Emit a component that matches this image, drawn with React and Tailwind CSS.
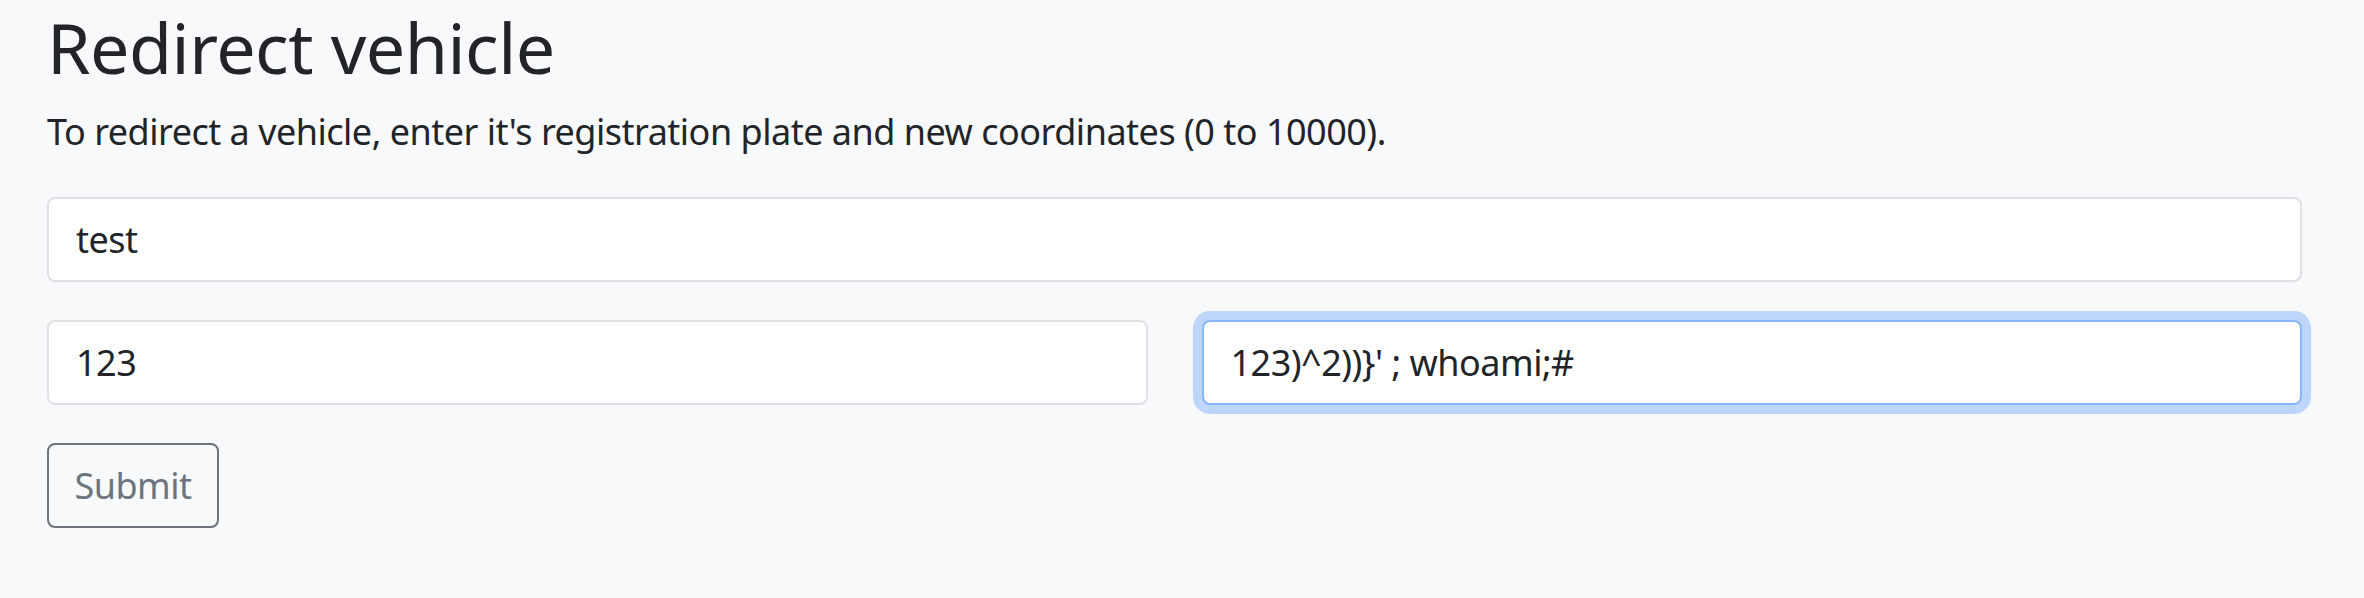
export default function App() {
  return (
    <div
      className="min-h-[598px] w-full bg-[#f8f9fa] text-[#212529] tracking-[-0.5px]"
      style={{ fontFamily: '"Noto Sans", sans-serif' }}
    >
      <div className="w-[2302px] pl-[47px] pt-[5px]">
        <h1 className="text-[70px] leading-[1.2] font-normal">Redirect vehicle</h1>
        <p className="mt-[16px] text-[36px] leading-[1.5]">
          To redirect a vehicle, enter it's registration plate and new coordinates (0 to 10000).
        </p>

        <form className="mt-[38px] flex flex-col gap-[38px]">
          <input
            type="text"
            defaultValue="test"
            className="h-[85px] w-full rounded-[8px] border-2 border-[#dee2e6] bg-white px-[27px] text-[36px] tracking-[-0.5px] text-[#212529] outline-none"
          />
          <div className="grid grid-cols-2 gap-[54px]">
            <input
              type="text"
              defaultValue="123"
              className="h-[85px] w-full rounded-[8px] border-2 border-[#dee2e6] bg-white px-[27px] text-[36px] tracking-[-0.5px] text-[#212529] outline-none"
            />
            <input
              type="text"
              defaultValue="123)^2))}' ; whoami;#"
              className="h-[85px] w-full rounded-[8px] border-2 border-[#86b7fe] bg-white px-[27px] text-[36px] tracking-[-0.5px] text-[#212529] shadow-[0_0_0_9px_rgba(13,110,253,0.25)] outline-none"
            />
          </div>
          <div>
            <button
              type="button"
              className="h-[85px] w-[172px] rounded-[8px] border-2 border-[#6c757d] text-[36px] tracking-[-0.5px] text-[#6c757d]"
            >
              Submit
            </button>
          </div>
        </form>
      </div>
    </div>
  );
}
